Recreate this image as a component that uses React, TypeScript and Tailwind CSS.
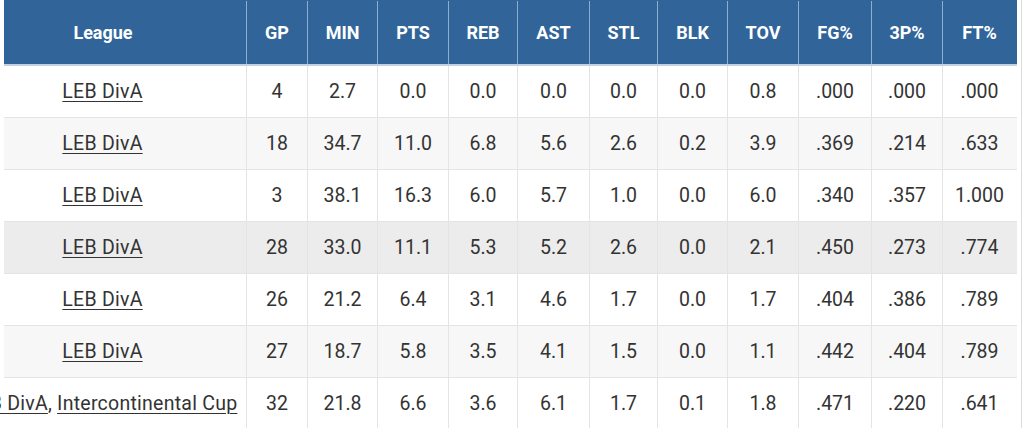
const cols = "grid-cols-[243px_61px_70px_71px_69px_72px_68px_70px_71px_73px_71px_73px]"

const headers = ["GP", "MIN", "PTS", "REB", "AST", "STL", "BLK", "TOV", "FG%", "3P%", "FT%"]

const rows = [
  { leagues: ["LEB DivA"], stats: ["4", "2.7", "0.0", "0.0", "0.0", "0.0", "0.0", "0.8", ".000", ".000", ".000"], bg: "bg-white" },
  { leagues: ["LEB DivA"], stats: ["18", "34.7", "11.0", "6.8", "5.6", "2.6", "0.2", "3.9", ".369", ".214", ".633"], bg: "bg-[#f7f7f7]" },
  { leagues: ["LEB DivA"], stats: ["3", "38.1", "16.3", "6.0", "5.7", "1.0", "0.0", "6.0", ".340", ".357", "1.000"], bg: "bg-white" },
  { leagues: ["LEB DivA"], stats: ["28", "33.0", "11.1", "5.3", "5.2", "2.6", "0.0", "2.1", ".450", ".273", ".774"], bg: "bg-[#ececec]" },
  { leagues: ["LEB DivA"], stats: ["26", "21.2", "6.4", "3.1", "4.6", "1.7", "0.0", "1.7", ".404", ".386", ".789"], bg: "bg-white" },
  { leagues: ["LEB DivA"], stats: ["27", "18.7", "5.8", "3.5", "4.1", "1.5", "0.0", "1.1", ".442", ".404", ".789"], bg: "bg-[#f7f7f7]" },
  { leagues: ["LEB DivA", "Intercontinental Cup"], stats: ["32", "21.8", "6.6", "3.6", "6.1", "1.7", "0.1", "1.8", ".471", ".220", ".641"], bg: "bg-white" },
]

export default function App() {
  return (
    <div className="flex h-[428px] w-[1024px] overflow-hidden bg-white font-['Roboto',sans-serif] text-[#333]">
      <div className="w-[4px] shrink-0" />
      <div className="w-[1013px] shrink-0">
        {/* header */}
        <div className={`grid ${cols} h-[66px] border-b-2 border-[#c3d2e2] bg-[#31659a] pt-px text-[18px] font-bold text-white`}>
          <div className="flex items-center justify-center whitespace-nowrap border-r border-[#8eaed0] pr-[44px]">League</div>
          {headers.map((h, i) => (
            <div
              key={h}
              className={`flex items-center justify-center ${i < headers.length - 1 ? "border-r border-[#8eaed0]" : ""}`}
            >
              {h}
            </div>
          ))}
        </div>

        {/* body */}
        {rows.map((r, ri) => (
          <div key={ri} className={`grid ${cols} h-[52px] border-b border-[#e4e4e4] text-[19.5px] ${r.bg}`}>
            <div className="flex items-center justify-center whitespace-nowrap border-r border-[#e4e4e4] pr-[45px] tracking-[0.25px]">
              {r.leagues.map((l, li) => (
                <span key={li}>
                  {li > 0 && ", "}
                  <a href="#" className="underline decoration-1 underline-offset-[3px]">{l}</a>
                </span>
              ))}
            </div>
            {r.stats.map((s, si) => (
              <div
                key={si}
                className={`flex items-center justify-center ${si < r.stats.length - 1 ? "border-r border-[#e4e4e4]" : ""}`}
              >
                {s}
              </div>
            ))}
          </div>
        ))}
      </div>
      <div className="ml-[4px] w-px shrink-0 bg-[#dcdcdc]" />
    </div>
  )
}
